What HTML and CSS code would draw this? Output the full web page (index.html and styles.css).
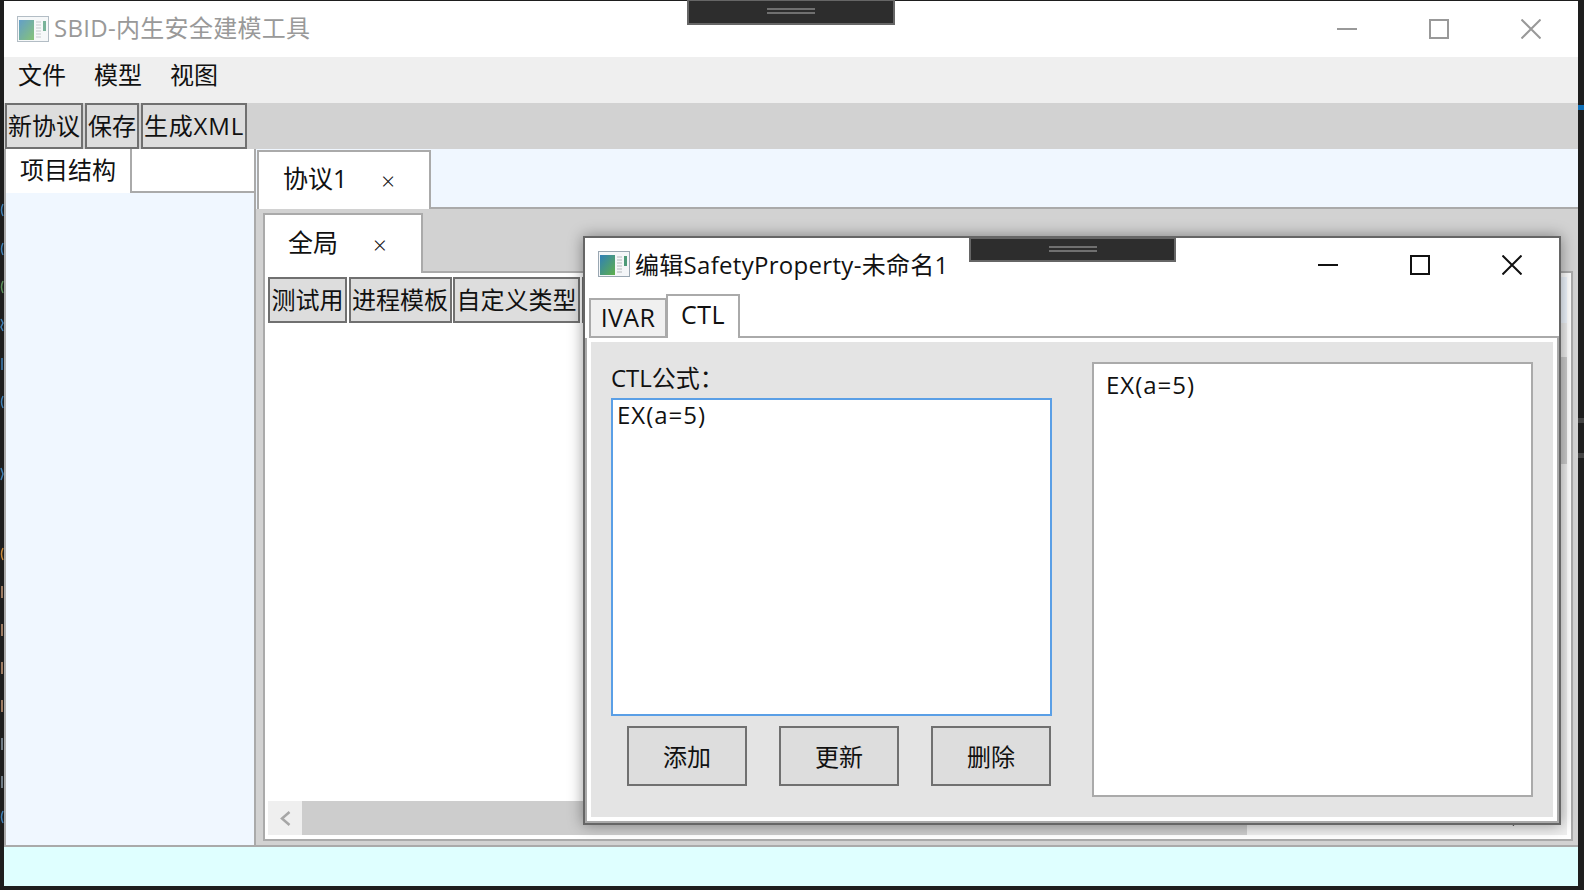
FILE: index.html
```html
<!DOCTYPE html>
<html lang="zh-CN">
<head>
    <meta charset="UTF-8">
    <title>SBID-内生安全建模工具</title>
    <link rel="stylesheet" href="styles.css">
</head>
<body>

    <svg width="0" height="0" class="defs">
        <defs>
            <linearGradient id="pane" x1="0" y1="0" x2="1" y2="1">
                <stop offset="0" stop-color="#2f7fb8"/>
                <stop offset="1" stop-color="#5fb04a"/>
            </linearGradient>
            <symbol id="app" viewBox="0 0 32 26">
                <rect x="0.5" y="0.5" width="31" height="25" fill="#f4f6f8" stroke="#9aa7b2"/>
                <rect x="2" y="4" width="15" height="20" fill="url(#pane)"/>
                <path d="M19 6h5M19 9h5M19 12h5M19 15h5M19 18h5M19 21h5" stroke="#b4b8bc" fill="none"/>
                <rect x="26" y="5" width="3" height="10" fill="#4d9a78"/>
            </symbol>
        </defs>
    </svg>

    <!-- 左边露出的编辑器文字 -->
    <div class="edge-left">
        <svg width="4" height="885" viewBox="0 0 4 885" fill="none" stroke-width="1.5">
            <path d="M3 203q-3 6 0 12M3 242q-3 6 0 12" stroke="#3f7fb5"/>
            <path d="M3 280q-3 6 0 12" stroke="#5b8f5a"/>
            <path d="M1 318l2 4-2 4 2 4M2 357v12M3 395q-3 6 0 12M1 467l2 6-2 6" stroke="#3f7fb5"/>
            <path d="M3 547q-3 6 0 12" stroke="#c8893a"/>
            <path d="M2 585v12M2 623v12M2 661v12M2 699v12" stroke="#c79a7a"/>
            <path d="M2 737v12M2 775v12" stroke="#8a9aa8"/>
            <path d="M3 810q-3 6 0 12" stroke="#3f7fb5"/>
        </svg>
    </div>

    <div class="window">
        <div class="handle handle-top"><i></i><i></i></div>

        <div class="titlebar main-title">
            <svg class="app-icon faded"><use href="#app"/></svg>
            <span class="title-text faded-text">SBID-内生安全建模工具</span>
            <div class="controls gray">
                <button class="ctl"><svg width="20" height="20" viewBox="0 0 20 20"><path d="M0 10h20"/></svg></button>
                <button class="ctl"><svg width="20" height="20" viewBox="0 0 20 20"><rect x="1" y="1" width="18" height="18"/></svg></button>
                <button class="ctl"><svg width="20" height="20" viewBox="0 0 20 20"><path d="M0.5 0.5l19 19M19.5 0.5l-19 19"/></svg></button>
            </div>
        </div>

        <div class="menubar">
            <span>文件</span>
            <span>模型</span>
            <span>视图</span>
        </div>

        <div class="toolbar">
            <button class="tool">新协议</button>
            <button class="tool">保存</button>
            <button class="tool tool-xml">生成XML</button>
        </div>

        <div class="main">
            <div class="sidebar">
                <div class="side-tabs">
                    <div class="side-tab">项目结构</div>
                    <div class="side-fill"></div>
                </div>
                <div class="side-body"></div>
            </div>

            <div class="editor">
                <div class="doc-tabs">
                    <div class="doc-tab">协议1<span class="close">×</span></div>
                    <div class="doc-fill"></div>
                </div>
                <div class="doc-body">
                    <div class="sub-tabs">
                        <div class="sub-tab">全局<span class="close">×</span></div>
                        <div class="sub-fill"></div>
                    </div>
                    <div class="sub-body">
                        <div class="sub-toolbar">
                            <button class="tool">测试用</button>
                            <button class="tool">进程模板</button>
                            <button class="tool">自定义类型</button>
                            <button class="tool tool-cut"></button>
                            <div class="sub-toolbar-fill"></div>
                        </div>
                        <div class="canvas"></div>
                        <div class="vscroll">
                            <div class="vbtn"></div>
                            <div class="vthumb"></div>
                        </div>
                        <div class="hscroll">
                            <div class="hbtn">
                                <svg width="11" height="15" viewBox="0 0 11 15"><path d="M9.5 1L2 7.5l7.5 6.5"/></svg>
                            </div>
                            <div class="hthumb"></div>
                            <div class="htrack"></div>
                            <div class="hbtn">
                                <svg width="11" height="15" viewBox="0 0 11 15"><path d="M1.5 1L9 7.5 1.5 14"/></svg>
                            </div>
                        </div>
                    </div>
                </div>
            </div>
        </div>

        <div class="statusbar"></div>

        <!-- 弹出窗口 -->
        <div class="dialog">
            <div class="handle handle-dialog"><i></i><i></i></div>
            <div class="titlebar dialog-title">
                <svg class="app-icon"><use href="#app"/></svg>
                <span class="title-text">编辑SafetyProperty-未命名1</span>
                <div class="controls dark">
                    <button class="ctl"><svg width="20" height="20" viewBox="0 0 20 20"><path d="M0 10h20"/></svg></button>
                    <button class="ctl"><svg width="20" height="20" viewBox="0 0 20 20"><rect x="1" y="1" width="18" height="18"/></svg></button>
                    <button class="ctl"><svg width="20" height="20" viewBox="0 0 20 20"><path d="M0.5 0.5l19 19M19.5 0.5l-19 19"/></svg></button>
                </div>
            </div>
            <div class="dialog-tabs">
                <div class="dlg-tab">IVAR</div>
                <div class="dlg-tab active">CTL</div>
                <div class="dlg-fill"></div>
            </div>
            <div class="dialog-body">
                <div class="form">
                    <div class="form-left">
                        <label class="form-label">CTL公式：</label>
                        <div class="input focus">EX(a=5)</div>
                        <div class="form-btns">
                            <button class="btn">添加</button>
                            <button class="btn">更新</button>
                            <button class="btn">删除</button>
                        </div>
                    </div>
                    <div class="list">
                        <div class="list-item">EX(a=5)</div>
                    </div>
                </div>
            </div>
        </div>
    </div>

    <div class="edge-right">
        <i class="mark-blue"></i>
        <i class="mark-gray"></i>
        <i class="mark-gray second"></i>
    </div>

</body>
</html>
```

FILE: styles.css
```css
* {
    box-sizing: border-box;
}

html, body {
    height: 100%;
}

body {
    margin: 0;
    padding: 1px 0 4px;
    display: flex;
    height: 890px;
    overflow: hidden;
    background-color: #1e1e1e;
    font-family: "Open Sans", "Noto Sans CJK SC", sans-serif;
    font-size: 24px;
    line-height: 34px;
    color: #111;
}

button {
    font: inherit;
    color: inherit;
    padding: 0;
    margin: 0;
}

.defs {
    position: absolute;
}

.edge-left {
    width: 4px;
    flex: none;
}

.edge-left svg {
    display: block;
}

.edge-right {
    width: 6px;
    flex: none;
    position: relative;
}

.edge-right i {
    position: absolute;
    left: 0;
    width: 6px;
}

.mark-blue {
    top: 104px;
    height: 5px;
    background: #0e70b8;
}

.mark-gray {
    top: 417px;
    height: 5px;
    background: #444;
}

.mark-gray.second {
    top: 452px;
}

.window {
    flex: 1;
    position: relative;
    display: flex;
    flex-direction: column;
    background: #fff;
}

/* 拖动条 */
.handle {
    position: absolute;
    z-index: 3;
    background: #2d2d2d;
    border: 2px solid #666;
    border-top-width: 1px;
    display: flex;
    flex-direction: column;
    align-items: center;
    gap: 2px;
    padding-top: 7px;
}

.handle i {
    width: 48px;
    height: 2px;
    background: #707070;
}

.handle-top {
    left: 683px;
    top: -1px;
    width: 208px;
    height: 25px;
}

.handle-dialog {
    left: 384px;
    top: 0;
    width: 207px;
    height: 24px;
}

/* 标题栏 */
.titlebar {
    height: 56px;
    flex: none;
    display: flex;
    align-items: center;
    padding-left: 13px;
    background: #fff;
}

.app-icon {
    width: 32px;
    height: 26px;
    flex: none;
}

.faded {
    opacity: .75;
}

.title-text {
    margin-left: 5px;
    white-space: nowrap;
    letter-spacing: .3px;
}

.main-title .title-text {
    margin-top: -2px;
}

.faded-text {
    color: #999;
}

.controls {
    margin-left: auto;
    margin-right: 1px;
    display: flex;
}

.ctl {
    width: 92px;
    height: 56px;
    border: 0;
    background: none;
    display: flex;
    align-items: center;
    justify-content: center;
}

.ctl svg {
    fill: none;
    stroke-width: 2;
}

.gray .ctl svg {
    stroke: #999;
}

.dark .ctl svg {
    stroke: #111;
}

.menubar {
    height: 46px;
    flex: none;
    display: flex;
    align-items: center;
    gap: 28px;
    padding: 0 0 10px 14px;
    background: #efefef;
}

.toolbar {
    height: 46px;
    flex: none;
    display: flex;
    gap: 2px;
    padding-left: 1px;
    background: #d2d2d2;
}

.tool {
    height: 46px;
    padding: 0 1.5px;
    border: 2px solid #707070;
    background: #ddd;
    white-space: nowrap;
}

.toolbar .tool {
    padding: 0 1px;
}

.toolbar .tool-xml {
    letter-spacing: .8px;
}

.main {
    flex: 1;
    display: flex;
    min-height: 0;
}

/* 左侧项目结构 */
.sidebar {
    width: 252px;
    flex: none;
    display: flex;
    flex-direction: column;
    border-left: 2px solid #aaa;
    border-right: 2px solid #aaa;
    border-bottom: 2px solid #aaa;
    background: #f0f7ff;
}

.side-tabs {
    height: 44px;
    flex: none;
    display: flex;
    background: #fff;
}

.side-tab {
    width: 124px;
    padding-left: 14px;
    line-height: 42px;
    background: #fff;
}

.side-fill {
    flex: 1;
    border-left: 2px solid #aaa;
    border-bottom: 2px solid #aaa;
}

.side-body {
    flex: 1;
}

/* 协议标签页 */
.editor {
    flex: 1;
    display: flex;
    flex-direction: column;
    min-width: 0;
}

.doc-tabs {
    height: 60px;
    flex: none;
    display: flex;
    padding-left: 1px;
    background: #f0f7ff;
}

.doc-tab {
    width: 174px;
    margin-top: 1px;
    padding: 9px 0 0 24px;
    font-size: 25px;
    background: #fff;
    border: 2px solid #aaa;
    border-bottom: 0;
}

.close {
    margin-left: 34px;
    font-size: 24px;
    font-weight: 300;
    vertical-align: -2px;
}

.doc-fill {
    flex: 1;
    border-bottom: 2px solid #aaa;
}

.doc-body {
    flex: 1;
    display: flex;
    flex-direction: column;
    min-height: 0;
    padding: 4px 5px 4px 7px;
    background: #d2d2d2;
    border-bottom: 2px solid #aaa;
}

.sub-tabs {
    height: 60px;
    flex: none;
    display: flex;
}

.sub-tab {
    width: 160px;
    padding: 10px 0 0 23px;
    font-size: 25px;
    background: #fff;
    border: 2px solid #aaa;
    border-bottom: 0;
}

.sub-tab .close {
    margin-left: 35px;
}

.sub-fill {
    flex: 1;
    border-bottom: 2px solid #aaa;
}

.sub-body {
    flex: 1;
    min-height: 0;
    display: grid;
    grid-template-columns: 1fr 34px;
    grid-template-rows: 46px 1fr 34px;
    padding: 4px 4px 4px 3px;
    background: #fff;
    border: 2px solid #aaa;
    border-top: 0;
}

.sub-toolbar {
    grid-column: 1 / 3;
    display: flex;
    gap: 1.5px;
}

.tool-cut {
    width: 40px;
}

.sub-toolbar-fill {
    flex: 1;
    background: #f0f7ff;
}

.canvas {
    background: #fff;
}

.vscroll {
    grid-column: 2;
    grid-row: 2 / 4;
    background: #efefef;
}

.vbtn {
    height: 34px;
}

.vthumb {
    height: 107px;
    background: #cdcdcd;
}

.hscroll {
    grid-column: 1;
    grid-row: 3;
    display: flex;
    background: #efefef;
}

.hbtn {
    width: 34px;
    flex: none;
    display: flex;
    align-items: center;
    justify-content: center;
}

.hbtn svg {
    fill: none;
    stroke: #a6a6a6;
    stroke-width: 2.5;
}

.hbtn:last-child svg {
    stroke: #333;
}

.hthumb {
    width: 945px;
    flex: none;
    background: #cdcdcd;
}

.htrack {
    flex: 1;
}

.statusbar {
    height: 39px;
    flex: none;
    background: #dfffff;
}

/* 编辑窗口 */
.dialog {
    position: absolute;
    left: 579px;
    top: 235px;
    width: 978px;
    height: 589px;
    display: flex;
    flex-direction: column;
    background: #fff;
    border: 2px solid #666;
    box-shadow: 0 0 14px rgba(0, 0, 0, .4);
}

.dialog-title {
    padding-left: 13px;
}

.dialog-title .app-icon {
    margin-top: -4px;
}

.dialog-title .title-text {
    margin-left: 5px;
    margin-top: -2px;
}

.dialog-title .controls {
    margin-top: -2px;
    margin-right: 1px;
}

.dialog-tabs {
    height: 44px;
    flex: none;
    display: flex;
    align-items: flex-end;
    padding-left: 4px;
    font-size: 25px;
}

.dlg-tab {
    width: 78px;
    height: 40px;
    text-align: center;
    line-height: 34px;
    letter-spacing: .4px;
    background: #f0f0f0;
    border: 2px solid #aaa;
}

.dlg-tab.active {
    width: 74px;
    height: 44px;
    margin-left: -1px;
    position: relative;
    line-height: 36px;
    background: #fff;
    border-bottom: 0;
}

.dlg-fill {
    flex: 1;
    border-bottom: 2px solid #aaa;
}

.dialog-body {
    flex: 1;
    min-height: 0;
    display: flex;
    padding: 4px;
    background: #fff;
    border: 2px solid #aaa;
    border-top: 0;
}

.form {
    flex: 1;
    display: grid;
    grid-template-columns: 441px 1fr;
    gap: 40px;
    padding: 20px;
    background: #e4e4e4;
}

.form-left {
    display: flex;
    flex-direction: column;
    min-height: 0;
}

.form-label {
    height: 36px;
    flex: none;
    line-height: 32px;
}

.input {
    height: 318px;
    flex: none;
    padding: 0 4px;
    line-height: 30px;
    letter-spacing: 1px;
    background: #fff;
    border: 2px solid #aaa;
}

.input.focus {
    border-color: #5a9fe6;
}

.form-btns {
    display: flex;
    gap: 32px;
    margin-top: 10px;
    padding: 0 1px 0 16px;
}

.btn {
    width: 120px;
    height: 60px;
    padding-top: 2px;
    border: 2px solid #707070;
    background: #ddd;
}

.list {
    background: #fff;
    border: 2px solid #aaa;
    padding: 4px 12px;
    letter-spacing: 1px;
}
```
